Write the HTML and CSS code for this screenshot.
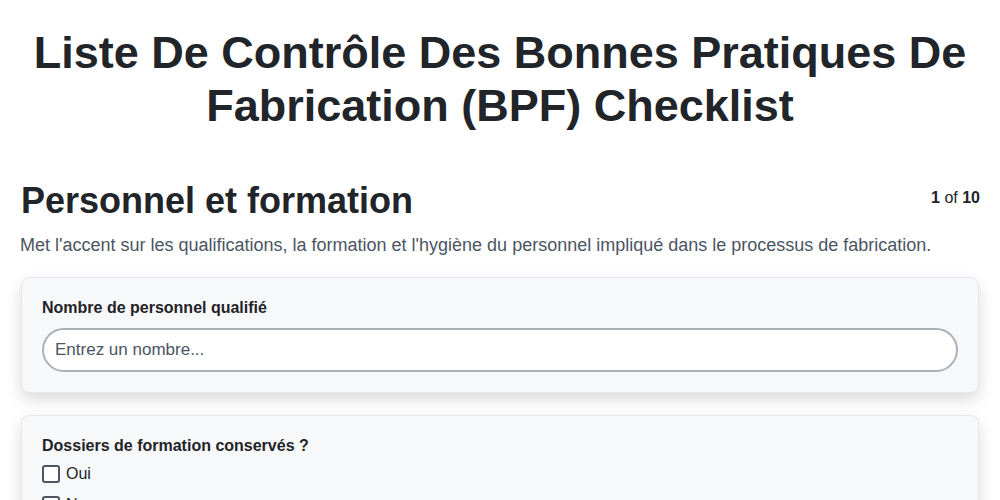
FILE: index.html
```html
<!DOCTYPE html>
<html lang="fr">
<head>
<meta charset="utf-8">
<title>Checklist BPF</title>
<link rel="stylesheet" href="styles.css">
</head>
<body>
<main class="page">
  <h1 class="title">Liste De Contrôle Des Bonnes Pratiques De Fabrication (BPF) Checklist</h1>
  <section class="section">
    <header class="section-head">
      <h2 class="section-title">Personnel et formation</h2>
      <div class="progress"><b>1</b> of <b>10</b></div>
    </header>
    <p class="section-desc">Met l'accent sur les qualifications, la formation et l'hygiène du personnel impliqué dans le processus de fabrication.</p>
    <div class="card">
      <label class="q-label" for="q1">Nombre de personnel qualifié</label>
      <input class="text-input" id="q1" type="text" placeholder="Entrez un nombre...">
    </div>
    <div class="card">
      <div class="q-label">Dossiers de formation conservés ?</div>
      <label class="option"><span class="box"></span><span>Oui</span></label>
      <label class="option"><span class="box"></span><span>Non</span></label>
    </div>
  </section>
</main>
</body>
</html>
```

FILE: styles.css
```css
* { box-sizing: border-box; }
html, body { margin: 0; background: #ffffff; }
body {
  font-family: "Liberation Sans", Arial, sans-serif;
  color: #212529;
}
.page {
  padding: 26px 20px 20px;
}
.title {
  margin: 0;
  text-align: center;
  font-size: 45px;
  line-height: 53px;
  font-weight: 700;
  color: #212529;
}
.section {
  margin-top: 47px;
}
.section-head {
  display: flex;
  justify-content: space-between;
  align-items: center;
}
.section-title {
  margin: 0;
  font-size: 36px;
  line-height: 1.2;
  font-weight: 700;
  padding-left: 1px;
}
.progress {
  font-size: 16px;
  color: #212529;
  margin-bottom: 6px;
}
.section-desc {
  margin: 11px 0 20px;
  font-size: 18px;
  line-height: 24px;
  color: #4b5563;
}
.card {
  margin: 0 1px 22px;
  background: #f7f8fa;
  border: 1px solid #e5e7eb;
  border-radius: 8px;
  padding: 20px;
  box-shadow: 0 7px 16px rgba(0, 0, 0, 0.14);
}
.q-label {
  display: block;
  font-size: 16px;
  line-height: 20px;
  font-weight: 700;
  color: #1f2328;
  margin-bottom: 10px;
}
.card .q-label + .option { margin-top: -4px; }
.text-input {
  display: block;
  width: 100%;
  height: 44px;
  border: 2px solid #aab0b8;
  border-radius: 22px;
  background: #ffffff;
  padding: 0 11px;
  font-family: inherit;
  font-size: 17px;
  color: #212529;
  outline: none;
}
.text-input::placeholder { color: #4b5563; opacity: 1; }
.option {
  display: flex;
  align-items: center;
  gap: 6px;
  font-size: 16px;
  line-height: 24px;
  margin-bottom: 7px;
  color: #212529;
}
.box {
  width: 18px;
  height: 18px;
  border: 2px solid #4b5563;
  border-radius: 3px;
  background: #ffffff;
  flex: none;
}
```
